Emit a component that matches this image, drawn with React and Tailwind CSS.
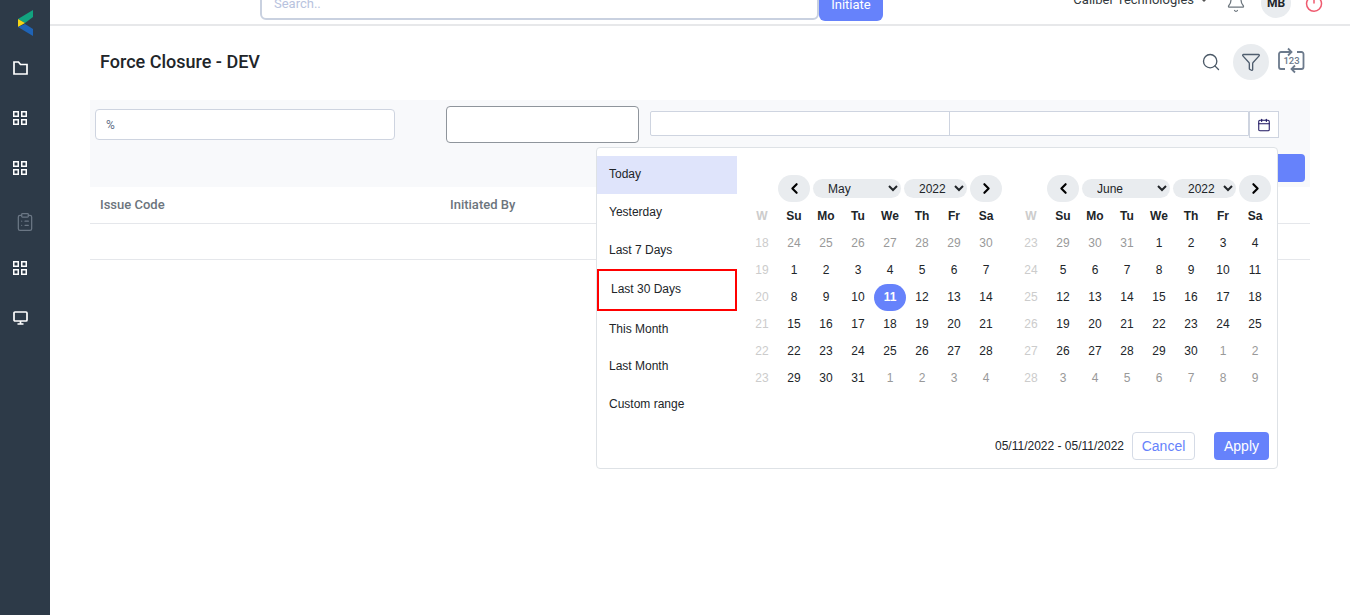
import { ClipboardList, Search, Funnel, Bell, Power, Calendar, ChevronLeft, ChevronRight } from 'lucide-react';

const ranges = [
    { name: 'Today', className: 'h-[38px] pl-3 pb-[2px] bg-[#dfe4fb]' },
    { name: 'Yesterday', className: 'h-[38px] pl-3 pb-[2px]' },
    { name: 'Last 7 Days', className: 'h-[37px] pl-3 pb-[2px]' },
    { name: 'Last 30 Days', className: 'h-[42px] pl-3 pb-[2px] border-2 border-[#ff0000]' },
    { name: 'This Month', className: 'h-[36px] pl-3' },
    { name: 'Last Month', className: 'h-[38px] pl-3' },
    { name: 'Custom range', className: 'h-[38px] pl-3' },
];

const dayNames = ['Su', 'Mo', 'Tu', 'We', 'Th', 'Fr', 'Sa'];

const months = [
    {
        name: 'May',
        selected: 11,
        weeks: [
            [18, [24, 25, 26, 27, 28, 29, 30]],
            [19, [1, 2, 3, 4, 5, 6, 7]],
            [20, [8, 9, 10, 11, 12, 13, 14]],
            [21, [15, 16, 17, 18, 19, 20, 21]],
            [22, [22, 23, 24, 25, 26, 27, 28]],
            [23, [29, 30, 31, 1, 2, 3, 4]],
        ],
    },
    {
        name: 'June',
        weeks: [
            [23, [29, 30, 31, 1, 2, 3, 4]],
            [24, [5, 6, 7, 8, 9, 10, 11]],
            [25, [12, 13, 14, 15, 16, 17, 18]],
            [26, [19, 20, 21, 22, 23, 24, 25]],
            [27, [26, 27, 28, 29, 30, 1, 2]],
            [28, [3, 4, 5, 6, 7, 8, 9]],
        ],
    },
];

const monthNames = ['January', 'February', 'March', 'April', 'May', 'June', 'July', 'August', 'September', 'October', 'November', 'December'];

function GridIcon() {
    return (
        <svg width="14" height="14" viewBox="0 0 14 14" fill="none" stroke="white" strokeWidth="1.5">
            <rect x="0.750" y="0.750" width="4.500" height="4.500" />
            <rect x="8.750" y="0.750" width="4.500" height="4.500" />
            <rect x="0.750" y="8.750" width="4.500" height="4.500" />
            <rect x="8.750" y="8.750" width="4.500" height="4.500" />
        </svg>
    );
}

function Sidebar() {
    return (
        <aside className="w-[50px] shrink-0 bg-[#2d3a48] flex flex-col">
            <div className="h-[43px] pl-[18px] pt-[10px]">
                <svg width="16" height="27" viewBox="0 0 16 27">
                    <polygon points="15,0 0,9 7,13 15,7" fill="#12a37f" />
                    <polygon points="0,9 7,13 0,17" fill="#f5d516" />
                    <polygon points="0,17 7,14 15,19 15,26" fill="#1f63b5" />
                </svg>
            </div>
            <div className="h-[50px] pl-[13px] flex items-center">
                <svg width="15" height="14" viewBox="0 0 15 14" fill="none" stroke="white" strokeWidth="1.7">
                    <path d="M1 1h4.500l2 2.500H14V13H1z" />
                </svg>
            </div>
            <div className="h-[50px] pl-[13px] flex items-center"><GridIcon /></div>
            <div className="h-[50px] pl-[13px] flex items-center"><GridIcon /></div>
            <div className="h-[50px] pl-[15px] pt-2 flex items-center"><ClipboardList size={20} strokeWidth={1.5} className="text-[#6b7785]" /></div>
            <div className="h-[50px] pl-[13px] flex items-center"><GridIcon /></div>
            <div className="h-[50px] pl-[13px] flex items-center">
                <svg width="15" height="14" viewBox="0 0 15 14" fill="none" stroke="white" strokeWidth="1.7">
                    <rect x="1" y="1" width="13" height="9" rx="1" />
                    <path d="M7.500 10v3M4.500 13h6" />
                </svg>
            </div>
        </aside>
    );
}

function TopBar() {
    return (
        <header className="h-[26px] border-b-2 border-[#e7e8ea] flex items-start overflow-hidden">
            <div className="ml-[210px] w-[559px] h-[38px] -mt-[18px] pt-[6px] bg-white border-2 border-[#c9d1e0] rounded-md pl-[12px] flex items-center text-[13px] text-[#b8c3de] shrink-0">
                Search..
            </div>
            <div className="w-[64px] h-[39px] -mt-[18px] pt-[6px] bg-[#6682fb] rounded-md text-white text-[13px] flex items-center justify-center shrink-0">
                Initiate
            </div>
            <div className="ml-auto flex items-start shrink-0">
                <span className="-mt-[8px] text-[13px] leading-[16px] text-[#343a40]">Caliber Technologies</span>
                <span className="ml-[7px] -mt-[1px] w-0 h-0 border-x-[3px] border-t-[3px] border-x-transparent border-t-[#555]"></span>
                <Bell size={20} strokeWidth={1.5} className="ml-[19px] -mt-[7px] text-[#6c757d]" />
                <div className="ml-[15px] -mt-[12px] w-[30px] h-[30px] rounded-full bg-[#e9ecef] flex items-center justify-center text-[12px] font-bold text-[#212529]">MB</div>
                <Power size={20} strokeWidth={1.8} className="ml-[13px] mr-[26px] -mt-[7px] text-[#ef5a6f]" />
            </div>
        </header>
    );
}

function RepeatNumbers() {
    return (
        <svg width="27" height="27" viewBox="0 0 27 27" fill="none" stroke="#6c7a8c" strokeWidth="1.8">
            <path d="M13 5H3a2 2 0 0 0-2 2v13a2 2 0 0 0 2 2h4" />
            <path d="M14 22h9.500a2 2 0 0 0 2-2V7a2 2 0 0 0-2-2H19" />
            <path d="M10 1.500l3.500 3.500-3.500 3.500" />
            <path d="M17 18.500l-3.500 3.500 3.500 3.500" />
            <text x="13.500" y="17" textAnchor="middle" fontSize="9.500" fontFamily="Roboto, sans-serif" fontWeight="500" fill="#6c7a8c" stroke="none">123</text>
        </svg>
    );
}

function MonthCalendar({ month }) {
    return (
        <div className="w-[256px]">
            <div className="ml-[32px] h-[27px] flex items-center text-[12px]">
                <button className="w-[32px] h-[27px] rounded-full bg-[#e9ecef] flex items-center justify-center text-black">
                    <ChevronLeft size={17} strokeWidth={3} />
                </button>
                <select defaultValue={month.name} className="ml-[3px] w-[88px] h-[19px] rounded-full bg-[#e9ecef] pl-[11px] text-[12px] text-[#212529]">
                    {monthNames.map((name) => <option key={name}>{name}</option>)}
                </select>
                <select defaultValue="2022" className="ml-[3px] w-[63px] h-[19px] rounded-full bg-[#e9ecef] pl-[11px] text-[12px] text-[#212529]">
                    <option>2021</option>
                    <option>2022</option>
                    <option>2023</option>
                </select>
                <button className="ml-[3px] w-[32px] h-[27px] rounded-full bg-[#e9ecef] flex items-center justify-center text-black">
                    <ChevronRight size={17} strokeWidth={3} />
                </button>
            </div>
            <div className="grid grid-cols-[repeat(8,32px)] auto-rows-[27px] text-[12px] text-center items-center">
                <span className="font-bold text-[#cccccc]">W</span>
                {dayNames.map((day) => <span key={day} className="font-bold text-[#212529]">{day}</span>)}
                {month.weeks.map(([week, days], row) => (
                    <div key={week} className="contents">
                        <span className="text-[#cccccc]">{week}</span>
                        {days.map((day) => {
                            const off = (row === 0 && day > 20) || (row >= 4 && day < 15);
                            if (day === month.selected) {
                                return <span key={day} className="h-[27px] leading-[27px] translate-y-px rounded-full bg-[#6682fb] text-white font-bold">{day}</span>;
                            }
                            return <span key={day} className={off ? 'text-[#999999]' : 'text-[#212529]'}>{day}</span>;
                        })}
                    </div>
                ))}
            </div>
        </div>
    );
}

function DateRangePicker() {
    return (
        <div className="absolute left-[546px] top-[147px] w-[682px] h-[322px] bg-white border border-[#dee2e6] rounded-[4px] flex font-['Liberation_Sans',sans-serif]">
            <ul className="w-[140px] pt-[8px] text-[12px] text-[#212529] shrink-0">
                {ranges.map((range) => (
                    <li key={range.name} className={`flex items-center ${range.className}`}>{range.name}</li>
                ))}
            </ul>
            <div className="pl-[9px] pt-[27px] flex-1">
                <div className="flex gap-[13px]">
                    {months.map((month) => <MonthCalendar key={month.name} month={month} />)}
                </div>
                <div className="mt-[41px] pr-[8px] flex items-center justify-end">
                    <span className="text-[12px] text-[#212529]">05/11/2022 - 05/11/2022</span>
                    <button className="ml-[8px] w-[63px] h-[28px] bg-white border border-[#d5dbe6] rounded-[4px] text-[14px] text-[#6682fb]">Cancel</button>
                    <button className="ml-[19px] w-[55px] h-[28px] bg-[#6682fb] rounded-[4px] text-[14px] text-white">Apply</button>
                </div>
            </div>
        </div>
    );
}

export default function App() {
    return (
        <div className="h-[615px] flex overflow-hidden bg-white font-[Roboto,sans-serif]">
            <Sidebar />
            <main className="relative flex-1 min-w-0">
                <TopBar />

                <div className="h-[74px] pl-[50px] pr-[45px] flex items-center">
                    <h1 className="text-[18px] font-medium text-[#212529] -mt-[4px]">Force Closure - DEV</h1>
                    <div className="ml-auto -mt-[2px] flex items-center">
                        <Search size={20} strokeWidth={1.6} className="text-[#4a5866]" />
                        <div className="ml-[12px] w-[36px] h-[36px] rounded-full bg-[#e9ecef] flex items-center justify-center">
                            <Funnel size={20} strokeWidth={1.6} className="text-[#4f5d6e]" />
                        </div>
                        <div className="ml-[9px] -mt-[3px]"><RepeatNumbers /></div>
                    </div>
                </div>

                <section className="ml-[40px] w-[1220px] h-[87px] bg-[#f8f9fb] px-[5px]">
                    <div className="flex items-start pt-[6px]">
                        <div className="mt-[3px] w-[300px] h-[31px] bg-white border border-[#ced4e0] rounded-[4px] pl-[10px] flex items-center text-[12px] text-[#5f6f86]">%</div>
                        <div className="ml-[51px] w-[193px] h-[37px] bg-white border-[1.5px] border-[#8f959c] rounded-[4px]"></div>
                        <div className="ml-[11px] mt-[5px] w-[599px] h-[25px] bg-white border border-[#ced4e0] rounded-l-[2px] flex">
                            <div className="w-[299px] border-r border-[#ced4e0]"></div>
                        </div>
                        <div className="mt-[5px] w-[30px] h-[27px] bg-white border border-[#ced4e0] flex items-center justify-center">
                            <Calendar size={14} strokeWidth={1.8} className="text-[#1d1560] -ml-[1px]" />
                        </div>
                    </div>
                    <div className="mt-[11px] flex justify-end">
                        <div className="w-[80px] h-[28px] bg-[#6682fb] rounded-[4px]"></div>
                    </div>
                </section>

                <div className="ml-[40px] w-[1220px] h-[37px] border-b border-[#e5e7eb] pl-[10px] flex items-center text-[13px] font-medium text-[#6c757d]">
                    <span className="w-[350px]">Issue Code</span>
                    <span>Initiated By</span>
                </div>
                <div className="ml-[40px] w-[1220px] h-[36px] border-b border-[#e5e7eb]"></div>

                <DateRangePicker />
            </main>
        </div>
    );
}
